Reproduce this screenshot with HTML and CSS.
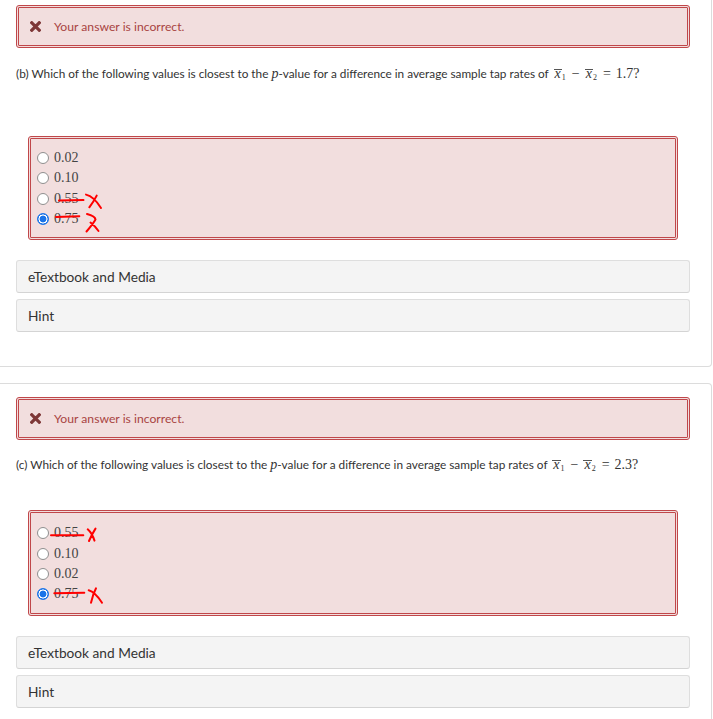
FILE: index.html
```html
<!DOCTYPE html>
<html>
<head>
<meta charset="utf-8">
<link rel="stylesheet" href="styles.css">
</head>
<body>
<div class="page">
  <section class="card card-first">
    <div class="alert">
      <svg class="alert-icon" width="11" height="11" viewBox="0 0 11 11"><path d="M1.8 1.8 L9.2 9.2 M9.2 1.8 L1.8 9.2" stroke="currentColor" stroke-width="3.2" stroke-linecap="square"/></svg>
      <span>Your answer is incorrect.</span>
    </div>
    <p class="question q-first">(b) Which of the following values is closest to the <span class="mi">p</span>-value for a difference in average sample tap rates of <span class="math"><span class="mi ovl">x</span><sub>1</sub><span class="op">−</span><span class="mi ovl">x</span><sub>2</sub><span class="op">=</span>1.7?</span></p>
    <div class="choices">
      <label class="choice"><input type="radio" name="qb"><span class="val">0.02</span></label>
      <label class="choice"><input type="radio" name="qb"><span class="val">0.10</span></label>
      <label class="choice"><input type="radio" name="qb"><span class="val">0.55</span>
        <svg class="mark" width="100" height="24" viewBox="0 0 100 24"><path d="M22 11.6 L46.5 11.1 M49 5.6 Q57 7.5 64 19 M59.7 6.6 Q57 12 52.3 18.3" /></svg></label>
      <label class="choice"><input type="radio" name="qb" checked><span class="val">0.75</span>
        <svg class="mark" width="100" height="24" viewBox="0 0 100 24"><path d="M19 8 L42.3 7.3 M50 5 Q58 7 58.5 10.5 Q56 15 49.5 22.5 M53.5 13.5 Q58 17 61.5 22" /></svg></label>
    </div>
    <div class="panel">eTextbook and Media</div>
    <div class="panel">Hint</div>
  </section>

  <section class="card">
    <div class="alert">
      <svg class="alert-icon" width="11" height="11" viewBox="0 0 11 11"><path d="M1.8 1.8 L9.2 9.2 M9.2 1.8 L1.8 9.2" stroke="currentColor" stroke-width="3.2" stroke-linecap="square"/></svg>
      <span>Your answer is incorrect.</span>
    </div>
    <p class="question q-second">(c) Which of the following values is closest to the <span class="mi">p</span>-value for a difference in average sample tap rates of <span class="math"><span class="mi ovl">x</span><sub>1</sub><span class="op">−</span><span class="mi ovl">x</span><sub>2</sub><span class="op">=</span>2.3?</span></p>
    <div class="choices choices-second">
      <label class="choice"><input type="radio" name="qc"><span class="val">0.55</span>
        <svg class="mark" width="100" height="24" viewBox="0 0 100 24"><path d="M14 12.3 L46.3 12.3 M50.7 6.3 Q55 10 57.5 17.6 M58.5 5.6 Q55 11 52 18" /></svg></label>
      <label class="choice"><input type="radio" name="qc"><span class="val">0.10</span></label>
      <label class="choice"><input type="radio" name="qc"><span class="val">0.02</span></label>
      <label class="choice"><input type="radio" name="qc" checked><span class="val">0.75</span>
        <svg class="mark" width="100" height="24" viewBox="0 0 100 24"><path d="M17.3 9.3 L47.3 8.7 M51.7 6.3 Q58 8 65 18.7 M59 4.3 Q56 10 54 18.7" /></svg></label>
    </div>
    <div class="panel">eTextbook and Media</div>
    <div class="panel">Hint</div>
  </section>
</div>
</body>
</html>
```

FILE: styles.css
```css
* { box-sizing: border-box; }
html, body { margin: 0; padding: 0; background: #fff; }
body { font-family: Lato, "Open Sans", sans-serif; color: #333; }
.page { width: 712px; }

.card {
  border: 1px solid #dcdcdc;
  border-left: none;
  border-radius: 0 4px 4px 0;
  padding: 13px 21px 34px 16px;
  margin-top: 16px;
  background: #fff;
}
.card-first { margin-top: -9px; }

.alert {
  height: 43px;
  border: 3px double #c0474a;
  border-radius: 3px;
  background: #f2dede;
  color: #a94442;
  display: flex;
  align-items: center;
  padding-left: 11px;
  font-size: 12.2px;
}
.alert-icon { color: #7e3737; margin-right: 13px; flex: none; }

.question {
  margin: 16px 0 0;
  height: 20px;
  font-size: 11.8px;
  line-height: 20px;
  color: #333;
  white-space: nowrap;
}
.q-first { margin-bottom: 52px; }
.q-second { margin-top: 15px; margin-bottom: 35px; }
.mi { font-family: "Liberation Serif", serif; font-style: italic; font-size: 14px; line-height: 1; }
.math { font-family: "Liberation Serif", serif; font-size: 14px; line-height: 1; margin-left: 2px; }
.ovl { display: inline-block; line-height: 8px; border-top: 1px solid #555; padding: 0 1px; }
.math sub { font-size: 8px; line-height: 1; vertical-align: -2px; }
.op { margin: 0 5px 0 6px; }

.choices {
  margin: 0 12px;
  border: 3px double #c0474a;
  border-radius: 3px;
  background: #f2dede;
  padding: 9px 0 8px 6px;
}
.choices-second { padding-top: 10px; }
.choice {
  position: relative;
  display: flex;
  align-items: center;
  height: 20.33px;
  font-family: "Liberation Serif", serif;
  font-size: 14px;
  color: #444;
}
.choice input {
  appearance: none;
  -webkit-appearance: none;
  margin: 0 5px 0 0;
  width: 12px;
  height: 12px;
  border: 1px solid #8f8f8f;
  border-radius: 50%;
  background: #fff;
  flex: none;
}
.choice input:checked {
  border-color: #1a73e8;
  background: radial-gradient(circle, #1a73e8 0 3.2px, #fff 3.7px 4.3px, #1a73e8 4.8px);
}
.mark { position: absolute; left: 0; top: 0; overflow: visible; }
.mark path { fill: none; stroke: #ff0000; stroke-width: 2; stroke-linecap: round; stroke-linejoin: round; }

.panel {
  margin-top: 6px;
  height: 33px;
  border: 1px solid #dedede;
  border-bottom-color: #d4d4d4;
  border-radius: 3px;
  background: #f4f4f4;
  padding-left: 11px;
  display: flex;
  align-items: center;
  font-size: 13.7px;
  color: #333;
}
.choices + .panel { margin-top: 20px; }
```
